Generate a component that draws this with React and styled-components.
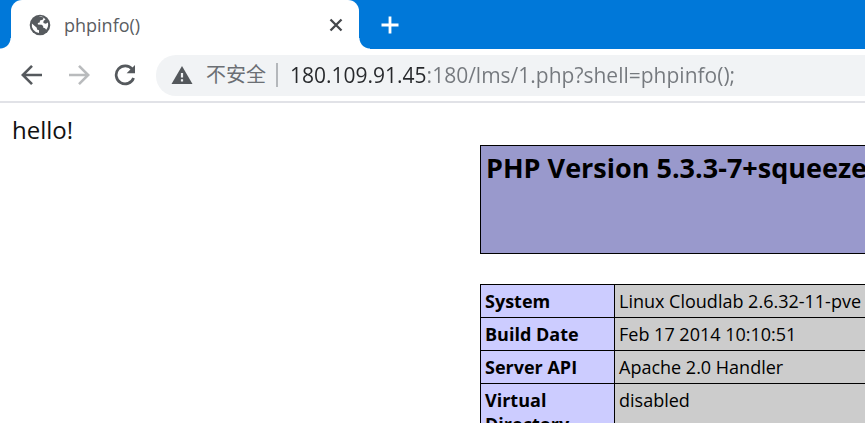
import React from 'react';
import styled, { createGlobalStyle } from 'styled-components';

const GlobalStyle = createGlobalStyle`
  *, *::before, *::after { box-sizing: border-box; }
  body {
    margin: 0;
    background: #fff;
    font-family: "Open Sans", "Noto Sans", "Noto Sans CJK SC", sans-serif;
  }
  button, input { font: inherit; }
`;

const Window = styled.div`
  display: flex;
  flex-direction: column;
  height: 100vh;
  overflow: hidden;
`;

const TabStrip = styled.header`
  display: flex;
  align-items: stretch;
  height: 49px;
  padding-left: 11px;
  background: #0078d9;
`;

const Tab = styled.div`
  position: relative;
  display: flex;
  align-items: center;
  width: 348px;
  padding: 0 13px 0 18px;
  background: #fff;
  border-radius: 11px 11px 0 0;

  &::before,
  &::after {
    content: "";
    position: absolute;
    bottom: 0;
    width: 11px;
    height: 11px;
  }
  &::before {
    right: 100%;
    background: radial-gradient(circle at 0 0, transparent 10px, #fff 11px);
  }
  &::after {
    left: 100%;
    background: radial-gradient(circle at 100% 0, transparent 10px, #fff 11px);
  }
`;

const TabTitle = styled.span`
  flex: 1;
  margin-left: 13px;
  color: #5a5d62;
  font-size: 18px;
  line-height: 24px;
`;

const IconButton = styled.button`
  display: flex;
  align-items: center;
  justify-content: center;
  flex: none;
  width: ${(p) => p.$width}px;
  padding: 0;
  border: 0;
  background: none;
  color: ${(p) => p.$color};
`;

const Toolbar = styled.nav`
  display: flex;
  align-items: center;
  flex: none;
  height: 54px;
  padding-left: 8px;
  border-bottom: 2px solid #e1e2e7;
  background: #fff;
`;

const AddressBar = styled.form`
  display: flex;
  align-items: center;
  flex: 1;
  min-width: 0;
  height: 41px;
  margin-left: 8px;
  padding-left: 15px;
  border-radius: 20px 0 0 20px;
  background: #f1f3f5;
`;

const Security = styled.button`
  display: flex;
  align-items: center;
  gap: 13px;
  flex: none;
  padding: 0;
  border: 0;
  background: none;
  color: #6b6f74;
  font-size: 20px;
  line-height: 24px;
`;

const Divider = styled.span`
  width: 2px;
  height: 24px;
  margin: 0 12px 0 10px;
  background: #b4b7bb;
`;

const UrlInput = styled.input`
  flex: 1;
  min-width: 0;
  height: 32px;
  padding: 0;
  border: 0;
  outline: 0;
  color: #75797e;
  font-size: 21px;
  background: linear-gradient(to right, #26282b 136px, #75797e 136px);
  background-clip: text;
  -webkit-background-clip: text;
  -webkit-text-fill-color: transparent;
`;

const Page = styled.main`
  flex: 1;
  min-height: 0;
  overflow: hidden;
  padding: 12px 0 0 12px;
  color: #111;
`;

const Greeting = styled.p`
  margin: 0;
  font-size: 24px;
  line-height: 30px;
`;

const Info = styled.div`
  width: 834px;
  margin-left: 468px;
`;

const Table = styled.table`
  width: 100%;
  margin-bottom: 30px;
  border-collapse: collapse;
  table-layout: fixed;
  color: #000;
  font-size: 18px;
  line-height: 24px;
`;

const VersionCell = styled.th`
  height: 108px;
  padding: 5px;
  border: 1px solid #000;
  background: #9999cc;
  text-align: left;
  vertical-align: top;
`;

const Title = styled.h1`
  margin: 0;
  font-size: 27px;
  line-height: 34px;
  white-space: nowrap;
`;

const KeyCell = styled.th`
  padding: 4px;
  border: 1px solid #000;
  background: #ccccff;
  text-align: left;
  vertical-align: top;
`;

const ValueCell = styled.td`
  padding: 4px;
  border: 1px solid #000;
  background: #cccccc;
  vertical-align: top;
`;

const Globe = () => (
  <svg width="22" height="22" viewBox="0 0 22 22" aria-hidden="true">
    <circle cx="11" cy="11" r="10.3" fill="#565a5e" />
    <path d="M8.6 3.2 12.8 2.5 14.7 3.4 13.7 5.7 11 6.6 10.7 8.4 8.8 9.1 8.9 10.5 12.7 10.7 14.1 12.1 14.3 13.7 16 14.2 17.2 15.7A8.1 8.1 0 0 0 18.9 8.5L16.8 9.8 14.4 9.1 14.5 6.9 16.5 5.2A8.2 8.2 0 0 0 8.6 3.2Z" fill="#fff" />
    <path d="M2.9 9.4 7.8 13.8 8 15.4 10 16.2 10 19A8.1 8.1 0 0 1 2.9 9.4Z" fill="#fff" />
  </svg>
);

const Arrow = ({ forward }) => (
  <svg width="22" height="22" viewBox="0 0 22 22" fill="none" stroke="currentColor" strokeWidth="2.6" aria-hidden="true">
    <path d={forward ? 'M1 11H19M11 1.8 20.2 11 11 20.2' : 'M21 11H3M11 1.8 1.8 11 11 20.2'} />
  </svg>
);

const Reload = () => (
  <svg width="22" height="22" viewBox="0 0 22 22" aria-hidden="true">
    <path d="M18.3 5.4A9 9 0 1 0 19.6 14" fill="none" stroke="currentColor" strokeWidth="2.7" />
    <path d="M21 1V9.2H12.6Z" fill="currentColor" />
  </svg>
);

const Warning = () => (
  <svg width="22" height="20" viewBox="0 0 22 20" aria-hidden="true">
    <path d="M11 1 21.5 19H.5Z" fill="#54585c" />
    <path d="M9.9 8h2.2v4.6H9.9zM9.9 14.2h2.2v2.2H9.9z" fill="#f1f3f5" />
  </svg>
);

const Close = () => (
  <svg width="14" height="14" viewBox="0 0 14 14" stroke="currentColor" strokeWidth="2.3" aria-hidden="true">
    <path d="M1.5 1.5 12.5 12.5M12.5 1.5 1.5 12.5" />
  </svg>
);

const Plus = () => (
  <svg width="18" height="18" viewBox="0 0 18 18" stroke="currentColor" strokeWidth="2.8" aria-hidden="true">
    <path d="M9 0.5V17.5M0.5 9H17.5" />
  </svg>
);

const rows = [
  ['System', 'Linux Cloudlab 2.6.32-11-pve'],
  ['Build Date', 'Feb 17 2014 10:10:51'],
  ['Server API', 'Apache 2.0 Handler'],
  ['Virtual Directory', 'disabled'],
];

export default function App() {
  return (
    <Window>
      <GlobalStyle />
      <TabStrip>
        <Tab>
          <Globe />
          <TabTitle>phpinfo()</TabTitle>
          <IconButton type="button" aria-label="Close tab" $width={20} $color="#45484c">
            <Close />
          </IconButton>
        </Tab>
        <IconButton type="button" aria-label="New tab" $width={62} $color="#fff">
          <Plus />
        </IconButton>
      </TabStrip>
      <Toolbar>
        <IconButton type="button" aria-label="Back" $width={47} $color="#55595d">
          <Arrow />
        </IconButton>
        <IconButton type="button" aria-label="Forward" $width={47} $color="#b9bbbd">
          <Arrow forward />
        </IconButton>
        <IconButton type="button" aria-label="Reload" $width={46} $color="#55595d">
          <Reload />
        </IconButton>
        <AddressBar onSubmit={(e) => e.preventDefault()}>
          <Security type="button">
            <Warning />
            不安全
          </Security>
          <Divider />
          <UrlInput
            type="text"
            aria-label="Address"
            spellCheck={false}
            defaultValue="180.109.91.45:180/lms/1.php?shell=phpinfo();"
          />
        </AddressBar>
      </Toolbar>
      <Page>
        <Greeting>hello!</Greeting>
        <Info>
          <Table>
            <tbody>
              <tr>
                <VersionCell>
                  <Title>PHP Version 5.3.3-7+squeeze</Title>
                </VersionCell>
              </tr>
            </tbody>
          </Table>
          <Table>
            <colgroup>
              <col width="134" />
              <col />
            </colgroup>
            <tbody>
              {rows.map(([key, value]) => (
                <tr key={key}>
                  <KeyCell scope="row">{key}</KeyCell>
                  <ValueCell>{value}</ValueCell>
                </tr>
              ))}
            </tbody>
          </Table>
        </Info>
      </Page>
    </Window>
  );
}
